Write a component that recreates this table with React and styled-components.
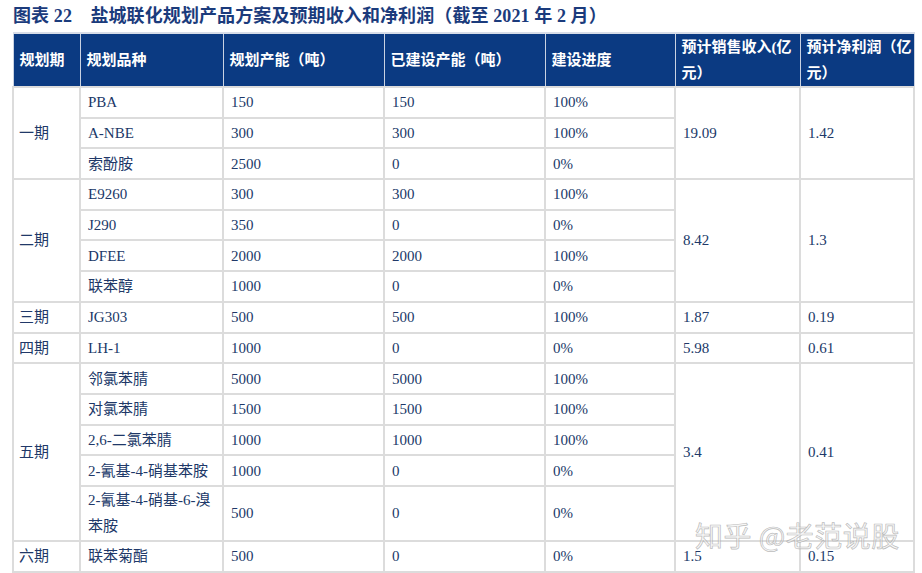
import React from "react";
import styled, { createGlobalStyle } from "styled-components";

const Global = createGlobalStyle`
  html, body { margin: 0; padding: 0; background: #fff; }
  body { font-family: "Liberation Serif", "Noto Sans CJK SC", serif; }
`;

const Page = styled.div`
  position: relative;
  width: 922px;
  height: 573px;
  overflow: hidden;
  background: #fff;
  padding: 5px 0 0 13px;
  box-sizing: border-box;
`;

const Title = styled.h1`
  margin: 0 0 5px 0;
  font-size: 18px;
  line-height: 22px;
  font-weight: 700;
  color: #1b3b7c;
  white-space: pre;
  letter-spacing: 0.1px;
`;

const Table = styled.table`
  border-collapse: collapse;
  table-layout: fixed;
  width: 901px;
  margin-left: -1px;
  font-size: 15px;
  color: #203868;
`;

const HeadCell = styled.th`
  background: #0b3a82;
  color: #fff;
  font-weight: 700;
  text-align: left;
  vertical-align: middle;
  padding: 0 2px 0 6px;
  height: 53px;
  line-height: 26px;
  border: 1px solid #c9d2e2;
  border-top: 2px solid #d8dde8;
  box-sizing: border-box;
  white-space: nowrap;
`;

const HeadLine = styled.span`
  display: block;
`;

const Cell = styled.td`
  padding: 0 4px 0 7px;
  height: ${(p) => (p.$tall ? "55px" : "30.7px")};
  line-height: ${(p) => (p.$tall ? "26px" : "20px")};
  vertical-align: middle;
  border: 2px solid #dcdcdc;
  box-sizing: border-box;
  white-space: ${(p) => (p.$wrap ? "normal" : "nowrap")};
  padding-left: ${(p) => (p.$first ? "5px" : "7px")};
`;

const Watermark = styled.div`
  position: absolute;
  left: 695px;
  top: 517px;
  font-family: "Noto Sans CJK SC", sans-serif;
  font-size: 28px;
  line-height: 36px;
  color: rgba(238, 238, 238, 0.5);
  -webkit-text-stroke: 0.7px rgba(160, 160, 160, 0.7);
  white-space: pre;
  letter-spacing: 0.5px;
`;

const cols = [67, 143, 161, 161, 130, 125, 114];

const phases = [
  {
    name: "一期",
    rev: "19.09",
    profit: "1.42",
    items: [
      ["PBA", "150", "150", "100%"],
      ["A-NBE", "300", "300", "100%"],
      ["索酚胺", "2500", "0", "0%"],
    ],
  },
  {
    name: "二期",
    rev: "8.42",
    profit: "1.3",
    items: [
      ["E9260", "300", "300", "100%"],
      ["J290", "350", "0", "0%"],
      ["DFEE", "2000", "2000", "100%"],
      ["联苯醇", "1000", "0", "0%"],
    ],
  },
  { name: "三期", rev: "1.87", profit: "0.19", items: [["JG303", "500", "500", "100%"]] },
  { name: "四期", rev: "5.98", profit: "0.61", items: [["LH-1", "1000", "0", "0%"]] },
  {
    name: "五期",
    rev: "3.4",
    profit: "0.41",
    items: [
      ["邻氯苯腈", "5000", "5000", "100%"],
      ["对氯苯腈", "1500", "1500", "100%"],
      ["2,6-二氯苯腈", "1000", "1000", "100%"],
      ["2-氰基-4-硝基苯胺", "1000", "0", "0%"],
      ["2-氰基-4-硝基-6-溴苯胺", "500", "0", "0%", true],
    ],
  },
  { name: "六期", rev: "1.5", profit: "0.15", items: [["联苯菊酯", "500", "0", "0%"]] },
];

const headers = [
  ["规划期"],
  ["规划品种"],
  ["规划产能（吨）"],
  ["已建设产能（吨）"],
  ["建设进度"],
  ["预计销售收入(亿", "元）"],
  ["预计净利润（亿", "元）"],
];

export default function App() {
  return (
    <Page>
      <Global />
      <Title>{"图表 22    盐城联化规划产品方案及预期收入和净利润（截至 2021 年 2 月）"}</Title>
      <Table>
        <colgroup>
          {cols.map((w, i) => (
            <col key={i} style={{ width: w }} />
          ))}
        </colgroup>
        <thead>
          <tr>
            {headers.map((h) => (
              <HeadCell key={h.join("")}>
                {h.map((line) => (
                  <HeadLine key={line}>{line}</HeadLine>
                ))}
              </HeadCell>
            ))}
          </tr>
        </thead>
        <tbody>
          {phases.map((ph) =>
            ph.items.map((it, idx) => {
              const tall = !!it[4];
              return (
                <tr key={ph.name + idx}>
                  {idx === 0 && (
                    <Cell $first rowSpan={ph.items.length}>
                      {ph.name}
                    </Cell>
                  )}
                  <Cell $tall={tall} $wrap={tall}>
                    {it[0]}
                  </Cell>
                  <Cell $tall={tall}>{it[1]}</Cell>
                  <Cell $tall={tall}>{it[2]}</Cell>
                  <Cell $tall={tall}>{it[3]}</Cell>
                  {idx === 0 && <Cell rowSpan={ph.items.length}>{ph.rev}</Cell>}
                  {idx === 0 && <Cell rowSpan={ph.items.length}>{ph.profit}</Cell>}
                </tr>
              );
            })
          )}
        </tbody>
      </Table>
      <Watermark>{"知乎 @老范说股"}</Watermark>
    </Page>
  );
}
